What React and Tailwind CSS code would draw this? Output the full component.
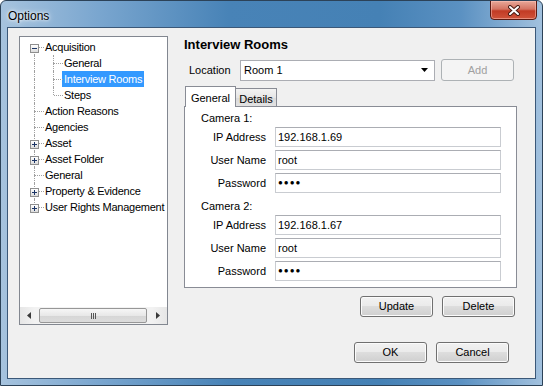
import { Fragment } from "react";

const treeRows = [
  { label: "Acquisition", level: 0, expand: "minus", first: true },
  { label: "General", level: 1 },
  { label: "Interview Rooms", level: 1, selected: true },
  { label: "Steps", level: 1, lastChild: true },
  { label: "Action Reasons", level: 0 },
  { label: "Agencies", level: 0 },
  { label: "Asset", level: 0, expand: "plus" },
  { label: "Asset Folder", level: 0, expand: "plus" },
  { label: "General", level: 0 },
  { label: "Property & Evidence", level: 0, expand: "plus" },
  { label: "User Rights Management", level: 0, expand: "plus", last: true },
];

const cameras = [
  { title: "Camera 1:", ip: "192.168.1.69", user: "root" },
  { title: "Camera 2:", ip: "192.168.1.67", user: "root" },
];

function ExpandBox({ type }) {
  return (
    <span className="absolute left-[5px] top-[5px] flex h-[9px] w-[9px] items-center justify-center border border-[#8f8f8f] bg-[linear-gradient(#ffffff,#dcdcdc)]">
      <span className="absolute h-[1px] w-[5px] bg-[#1c3566]" />
      {type === "plus" && <span className="absolute h-[5px] w-[1px] bg-[#1c3566]" />}
    </span>
  );
}

function TreeCell({ top, bottom, branch, expand }) {
  return (
    <span className="relative h-[16px] w-[19px] shrink-0">
      {top && <span className="absolute left-[9px] top-0 h-[8px] border-l border-dotted border-[#a0a0a0]" />}
      {bottom && <span className="absolute left-[9px] top-[8px] h-[8px] border-l border-dotted border-[#a0a0a0]" />}
      {branch && <span className="absolute left-[10px] top-[8px] w-[9px] border-t border-dotted border-[#a0a0a0]" />}
      {expand && <ExpandBox type={expand} />}
    </span>
  );
}

function TreeView() {
  return (
    <div className="flex h-[289px] w-[149px] shrink-0 flex-col overflow-hidden border border-[#828790] bg-white">
      <div className="flex-1 pl-[5px] pt-[2px]">
        {treeRows.map((row, index) => (
          <div key={index} className="flex h-[16px] items-center whitespace-nowrap tracking-[-0.25px]">
            {row.level === 0 ? (
              <TreeCell top={!row.first} bottom={!row.last} branch expand={row.expand} />
            ) : (
              <Fragment>
                <TreeCell top bottom />
                <TreeCell top bottom={!row.lastChild} branch />
              </Fragment>
            )}
            <span
              className={
                row.selected
                  ? "-ml-[1px] h-[16px] bg-[#3399ff] px-[2px] leading-[16px] text-white"
                  : "pl-[1px] leading-[16px] text-black"
              }
            >
              {row.label}
            </span>
          </div>
        ))}
      </div>
      <div className="flex h-[17px] shrink-0 items-center bg-[linear-gradient(90deg,#e6e6e6,#f2f2f2_10%,#f2f2f2_90%,#e6e6e6)]">
        <div className="flex h-[17px] w-[17px] items-center justify-center">
          <svg width="4" height="7" viewBox="0 0 4 7">
            <polygon points="4,0 0,3.5 4,7" fill="#3a3a3a" />
          </svg>
        </div>
        <div className="ml-[2px] flex h-[15px] w-[108px] items-center justify-center rounded-[2px] border border-[#979797] bg-[linear-gradient(#f6f6f6,#e8e8e8_50%,#d6d6d6_51%,#dcdcdc)]">
          <span className="flex gap-[1px]">
            <span className="h-[6px] w-[1px] bg-[#555]" />
            <span className="h-[6px] w-[1px] bg-[#555]" />
            <span className="h-[6px] w-[1px] bg-[#555]" />
          </span>
        </div>
        <div className="flex h-[17px] flex-1 items-center justify-end pr-[7px]">
          <svg width="4" height="7" viewBox="0 0 4 7">
            <polygon points="0,0 4,3.5 0,7" fill="#3a3a3a" />
          </svg>
        </div>
      </div>
    </div>
  );
}

function Button({ children, disabled }) {
  if (disabled) {
    return (
      <div className="flex h-[22px] w-[73px] items-center justify-center rounded-[3px] border border-[#adb2b5] bg-[#f4f4f4] text-[#a0a0a0]">
        {children}
      </div>
    );
  }
  return (
    <div className="flex h-[21px] w-[73px] items-center justify-center rounded-[3px] border border-[#707070] bg-[linear-gradient(#f2f2f2_0%,#ebebeb_45%,#dddddd_50%,#cfcfcf_100%)] text-black shadow-[inset_0_0_0_1px_#fbfbfb]">
      {children}
    </div>
  );
}

function TextBox({ value, password }) {
  return (
    <div className="flex h-[20px] w-[226px] items-center border border-[#c9ccd1] border-t-[#abadb3] bg-white pl-[2px]">
      {password ? (
        <span className="text-[8px] tracking-[1px] text-black">●●●●</span>
      ) : (
        <span className="text-black">{value}</span>
      )}
    </div>
  );
}

function FieldRow({ label, children }) {
  return (
    <div className="flex items-center">
      <span className="w-[81px] text-right">{label}</span>
      <span className="w-[9px]" />
      {children}
    </div>
  );
}

function App() {
  return (
    <div className="flex h-[386px] w-[543px] flex-col overflow-hidden rounded-t-[6px] border border-[#2c4258] bg-[linear-gradient(90deg,#a6c3de_0%,#7aa6cf_18%,#4883b7_42%,#4581b5_70%,#5b91c2_85%,#a2c1de_100%)] font-['Liberation_Sans',Arial,sans-serif] text-[11px]">
      <div className="flex h-[26px] shrink-0 items-start justify-between">
        <span className="pl-[7px] pt-[8px] text-[12px] leading-[14px] text-black [text-shadow:0_0_6px_#ffffff,0_0_3px_#ffffff]">
          Options
        </span>
        <div className="mr-[5px] flex h-[20px] w-[47px] -translate-y-[1px] items-center justify-center rounded-b-[4px] border border-[#5b1a12] bg-[linear-gradient(#e8a899_0%,#d47462_45%,#c23b25_55%,#d0533a_100%)] shadow-[inset_0_0_0_1px_rgba(255,200,190,0.5)]">
          <svg width="14" height="11" viewBox="0 0 14 11">
            <path d="M3 2 L11 9 M11 2 L3 9" stroke="#4a1c14" strokeWidth="4" strokeLinecap="round" />
            <path d="M3 2 L11 9 M11 2 L3 9" stroke="#ffffff" strokeWidth="2" strokeLinecap="round" />
          </svg>
        </div>
      </div>

      <div className="mx-[6px] flex h-[352px] shrink-0 flex-col border border-[#3b5878] bg-[#f0f0f0]">
        <div className="flex pl-[11px] pt-[8px]">
          <TreeView />

          <div className="ml-[16px] flex w-[333px] flex-col">
            <div className="mt-[1px] h-[16px] text-[13px] font-bold leading-[16px] text-black">
              Interview Rooms
            </div>

            <div className="mt-[6px] flex h-[22px] items-center">
              <span className="w-[56px] pl-[5px] text-black">Location</span>
              <div className="flex h-[21px] w-[195px] items-center justify-between border border-[#abadb3] bg-white pl-[3px] pr-[6px]">
                <span className="text-black">Room 1</span>
                <svg width="7" height="4" viewBox="0 0 7 4">
                  <polygon points="0,0 7,0 3.5,4" fill="#000" />
                </svg>
              </div>
              <span className="w-[6px]" />
              <Button disabled>Add</Button>
            </div>

            <div className="mt-[5px] flex h-[20px] items-end">
              <div className="relative z-10 ml-[1px] -mb-[1px] flex h-[21px] w-[51px] items-start justify-center border border-b-0 border-[#898c95] bg-white pt-[3px] text-black">
                General
              </div>
              <div className="-ml-[1px] flex h-[18px] w-[42px] items-start justify-center border border-b-0 border-[#898c95] bg-[linear-gradient(#f3f3f3,#e6e6e6_50%,#dadada_51%,#e2e2e2)] pt-[2px] text-black">
                Details
              </div>
            </div>

            <div className="flex flex-col border border-[#898c95] bg-white pb-[6px]">
              {cameras.map((camera, index) => (
                <div key={camera.title} className={index === 0 ? "mt-[4px]" : "mt-[6px]"}>
                  <div className="h-[14px] pl-[16px] leading-[14px] text-black">{camera.title}</div>
                  <div className="mt-[2px] flex flex-col gap-[3px]">
                    <FieldRow label="IP Address">
                      <TextBox value={camera.ip} />
                    </FieldRow>
                    <FieldRow label="User Name">
                      <TextBox value={camera.user} />
                    </FieldRow>
                    <FieldRow label="Password">
                      <TextBox password />
                    </FieldRow>
                  </div>
                </div>
              ))}
            </div>

            <div className="mt-[8px] flex justify-end gap-[9px] pr-[2px]">
              <Button>Update</Button>
              <Button>Delete</Button>
            </div>
          </div>
        </div>

        <div className="mt-[17px] flex justify-end gap-[9px] pr-[26px]">
          <Button>OK</Button>
          <Button>Cancel</Button>
        </div>
      </div>
    </div>
  );
}

export default App;
